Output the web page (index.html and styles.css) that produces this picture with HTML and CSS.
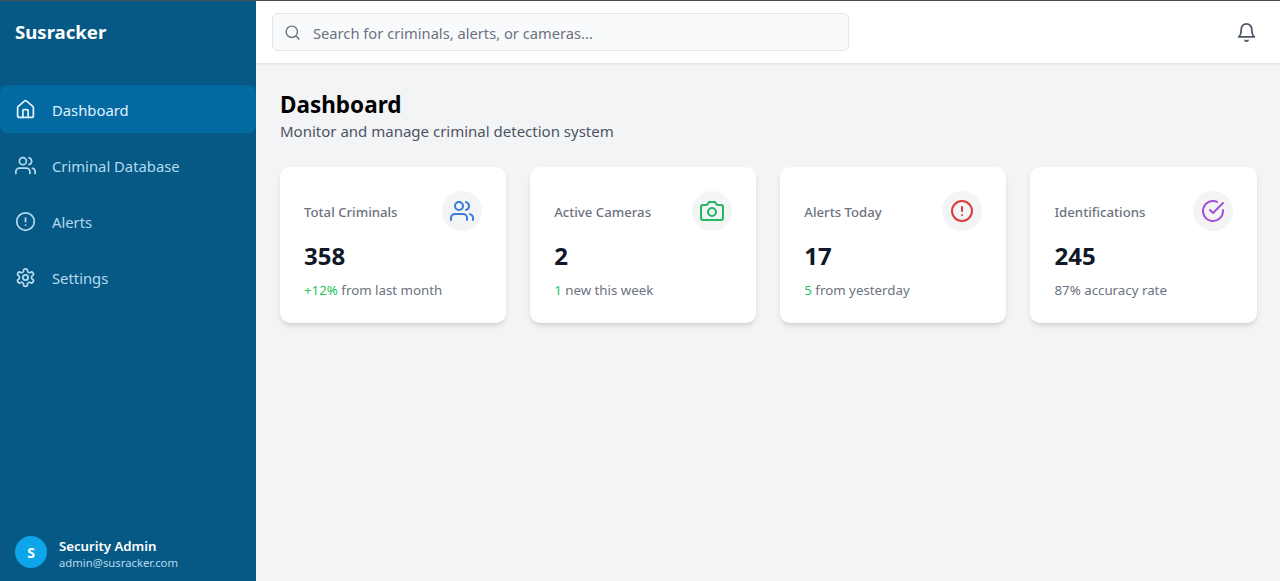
FILE: index.html
```html
<!DOCTYPE html>
<html lang="en">
<head>
  <meta charset="UTF-8" />
  <meta name="viewport" content="width=device-width, initial-scale=1.0"/>
  <title>Susracker</title>
  <link rel="stylesheet" href="styles.css">
</head>
<body>
  <div class="app">
    <aside class="sidebar">
      <div class="logo">Susracker</div>
      <nav class="nav">
        <a class="nav-item active">
          <svg class="nav-icon" viewBox="0 0 24 24"><path d="M15 21v-8a1 1 0 0 0-1-1h-4a1 1 0 0 0-1 1v8"/><path d="M3 10a2 2 0 0 1 .709-1.528l7-5.999a2 2 0 0 1 2.582 0l7 5.999A2 2 0 0 1 21 10v9a2 2 0 0 1-2 2H5a2 2 0 0 1-2-2z"/></svg>
          <span class="nav-text">Dashboard</span>
        </a>
        <a class="nav-item">
          <svg class="nav-icon" viewBox="0 0 24 24"><path d="M17 21v-2a4 4 0 0 0-4-4H5a4 4 0 0 0-4 4v2"/><circle cx="9" cy="7" r="4"/><path d="M23 21v-2a4 4 0 0 0-3-3.87"/><path d="M16 3.13a4 4 0 0 1 0 7.75"/></svg>
          <span class="nav-text">Criminal Database</span>
        </a>
        <a class="nav-item">
          <svg class="nav-icon" viewBox="0 0 24 24"><circle cx="12" cy="12" r="10"/><path d="M12 8v4"/><path d="M12 16h.01"/></svg>
          <span class="nav-text">Alerts</span>
        </a>
        <a class="nav-item">
          <svg class="nav-icon" viewBox="0 0 24 24"><path d="M12.22 2h-.44a2 2 0 0 0-2 2v.18a2 2 0 0 1-1 1.73l-.43.25a2 2 0 0 1-2 0l-.15-.08a2 2 0 0 0-2.73.73l-.22.38a2 2 0 0 0 .73 2.73l.15.1a2 2 0 0 1 1 1.72v.51a2 2 0 0 1-1 1.74l-.15.09a2 2 0 0 0-.73 2.73l.22.38a2 2 0 0 0 2.73.73l.15-.08a2 2 0 0 1 2 0l.43.25a2 2 0 0 1 1 1.73V20a2 2 0 0 0 2 2h.44a2 2 0 0 0 2-2v-.18a2 2 0 0 1 1-1.73l.43-.25a2 2 0 0 1 2 0l.15.08a2 2 0 0 0 2.73-.73l.22-.39a2 2 0 0 0-.73-2.73l-.15-.08a2 2 0 0 1-1-1.74v-.5a2 2 0 0 1 1-1.74l.15-.09a2 2 0 0 0 .73-2.73l-.22-.38a2 2 0 0 0-2.73-.73l-.15.08a2 2 0 0 1-2 0l-.43-.25a2 2 0 0 1-1-1.73V4a2 2 0 0 0-2-2z"/><circle cx="12" cy="12" r="3"/></svg>
          <span class="nav-text">Settings</span>
        </a>
      </nav>
      <div class="user">
        <div class="avatar">S</div>
        <div>
          <div class="user-name">Security Admin</div>
          <div class="user-mail">admin@susracker.com</div>
        </div>
      </div>
    </aside>

    <div class="content">
      <header class="topbar">
        <div class="search">
          <svg class="search-icon" viewBox="0 0 24 24"><circle cx="11" cy="11" r="8"/><path d="m21 21-4.3-4.3"/></svg>
          <span class="search-text">Search for criminals, alerts, or cameras...</span>
        </div>
        <svg class="bell" viewBox="0 0 24 24"><path d="M18 8A6 6 0 0 0 6 8c0 7-3 9-3 9h18s-3-2-3-9"/><path d="M13.73 21a2 2 0 0 1-3.46 0"/></svg>
      </header>

      <main class="main">
        <h1>Dashboard</h1>
        <p class="subtitle">Monitor and manage criminal detection system</p>
        <div class="cards">
          <div class="card">
            <div class="card-top">
              <span class="card-label">Total Criminals</span>
              <span class="card-icon blue"><svg viewBox="0 0 24 24"><path d="M17 21v-2a4 4 0 0 0-4-4H5a4 4 0 0 0-4 4v2"/><circle cx="9" cy="7" r="4"/><path d="M23 21v-2a4 4 0 0 0-3-3.87"/><path d="M16 3.13a4 4 0 0 1 0 7.75"/></svg></span>
            </div>
            <div class="card-value">358</div>
            <div class="card-note"><span class="up">+12%</span> from last month</div>
          </div>
          <div class="card">
            <div class="card-top">
              <span class="card-label">Active Cameras</span>
              <span class="card-icon green"><svg viewBox="0 0 24 24"><path d="M23 19a2 2 0 0 1-2 2H3a2 2 0 0 1-2-2V8a2 2 0 0 1 2-2h4l2-3h6l2 3h4a2 2 0 0 1 2 2z"/><circle cx="12" cy="13" r="4"/></svg></span>
            </div>
            <div class="card-value">2</div>
            <div class="card-note"><span class="up">1</span> new this week</div>
          </div>
          <div class="card">
            <div class="card-top">
              <span class="card-label">Alerts Today</span>
              <span class="card-icon red"><svg viewBox="0 0 24 24"><circle cx="12" cy="12" r="10"/><path d="M12 8v4"/><path d="M12 16h.01"/></svg></span>
            </div>
            <div class="card-value">17</div>
            <div class="card-note"><span class="up">5</span> from yesterday</div>
          </div>
          <div class="card">
            <div class="card-top">
              <span class="card-label">Identifications</span>
              <span class="card-icon purple"><svg viewBox="0 0 24 24"><path d="M22 11.08V12a10 10 0 1 1-5.93-9.14"/><path d="M22 4 12 14.01l-3-3"/></svg></span>
            </div>
            <div class="card-value">245</div>
            <div class="card-note">87% accuracy rate</div>
          </div>
        </div>
      </main>
    </div>
  </div>
</body>
</html>
```

FILE: styles.css
```css
* {
  box-sizing: border-box;
}
body {
  margin: 0;
  font-family: "Noto Sans", sans-serif;
  background-color: #f3f4f6;
  overflow: hidden;
}
svg {
  fill: none;
  stroke: currentColor;
  stroke-width: 2;
  stroke-linecap: round;
  stroke-linejoin: round;
}
.app {
  display: flex;
  height: 581px;
  border-top: 1px solid #4a4d50;
}
.sidebar {
  width: 256px;
  flex-shrink: 0;
  display: flex;
  flex-direction: column;
  background-color: #075985;
  color: #fff;
}
.logo {
  height: 84px;
  padding: 17px 15px 0;
  font-size: 18.6px;
  line-height: 28px;
  font-weight: 700;
}
.nav {
  flex: 1;
  display: flex;
  flex-direction: column;
  gap: 8px;
}
.nav-item {
  display: flex;
  align-items: center;
  gap: 16px;
  height: 48px;
  padding: 0 15px;
  border-radius: 8px;
  font-size: 14.8px;
  color: #b4d9ef;
}
.nav-item.active {
  background-color: #0369a1;
  color: #e0f2fe;
}
.nav-icon {
  width: 21px;
  height: 21px;
  flex-shrink: 0;
}
.nav-text {
  padding-top: 2px;
}
.user {
  display: flex;
  align-items: flex-end;
  gap: 12px;
  padding: 0 15px 10px;
}
.avatar {
  width: 32px;
  height: 32px;
  margin-bottom: 3px;
  border-radius: 50%;
  display: flex;
  align-items: center;
  justify-content: center;
  background-color: #0ea5e9;
  font-size: 14px;
  font-weight: 700;
}
.user-name {
  font-size: 13.2px;
  line-height: 18px;
  font-weight: 600;
}
.user-mail {
  font-size: 11.3px;
  line-height: 16px;
  color: #b4d9ef;
}
.content {
  flex: 1;
  min-width: 0;
}
.topbar {
  height: 62px;
  display: flex;
  align-items: center;
  justify-content: space-between;
  padding: 0 23px 0 16px;
  background-color: #fff;
  box-shadow: 0 1px 2px rgba(0, 0, 0, 0.1);
}
.search {
  width: 576.5px;
  height: 38px;
  display: flex;
  align-items: center;
  gap: 12px;
  padding: 0 11px;
  border: 1px solid #e2e5e9;
  border-radius: 6px;
  background-color: #f9fafb;
  font-size: 14.7px;
  color: #6b7280;
}
.search-icon {
  width: 17px;
  height: 17px;
  color: #6b7280;
}
.search-text {
  padding-top: 2px;
}
.bell {
  width: 21px;
  height: 21px;
  color: #4b5563;
}
.main {
  padding: 28px 23.4px 24px 24px;
}
h1 {
  margin: 0;
  font-size: 22.5px;
  line-height: 28px;
  font-weight: 700;
  color: #000;
}
.subtitle {
  margin: 0 0 24px;
  font-size: 15px;
  line-height: 24px;
  color: #4b5563;
}
.cards {
  display: grid;
  grid-template-columns: repeat(4, 1fr);
  gap: 24px;
}
.card {
  height: 155.5px;
  padding: 24px;
  border-radius: 10px;
  background-color: #fff;
  box-shadow: 0 4px 6px -1px rgba(0, 0, 0, 0.1), 0 2px 4px -2px rgba(0, 0, 0, 0.1);
}
.card-top {
  display: flex;
  align-items: center;
  justify-content: space-between;
  margin-bottom: 9px;
}
.card-label {
  padding-top: 2px;
  font-size: 13.2px;
  font-weight: 500;
  color: #6b7280;
}
.card-icon {
  width: 40px;
  height: 40px;
  border-radius: 50%;
  display: flex;
  align-items: center;
  justify-content: center;
  background-color: #f3f4f6;
}
.card-icon svg {
  width: 24px;
  height: 24px;
}
.blue { color: #3b7bd6; }
.green { color: #22b861; }
.red { color: #dc3c3c; }
.purple { color: #a84fd8; }
.card-value {
  font-size: 24px;
  line-height: 32px;
  font-weight: 700;
  color: #111827;
}
.card-note {
  margin-top: 8px;
  font-size: 13.3px;
  line-height: 20px;
  color: #6b7280;
}
.up {
  color: #22c55e;
}
```
